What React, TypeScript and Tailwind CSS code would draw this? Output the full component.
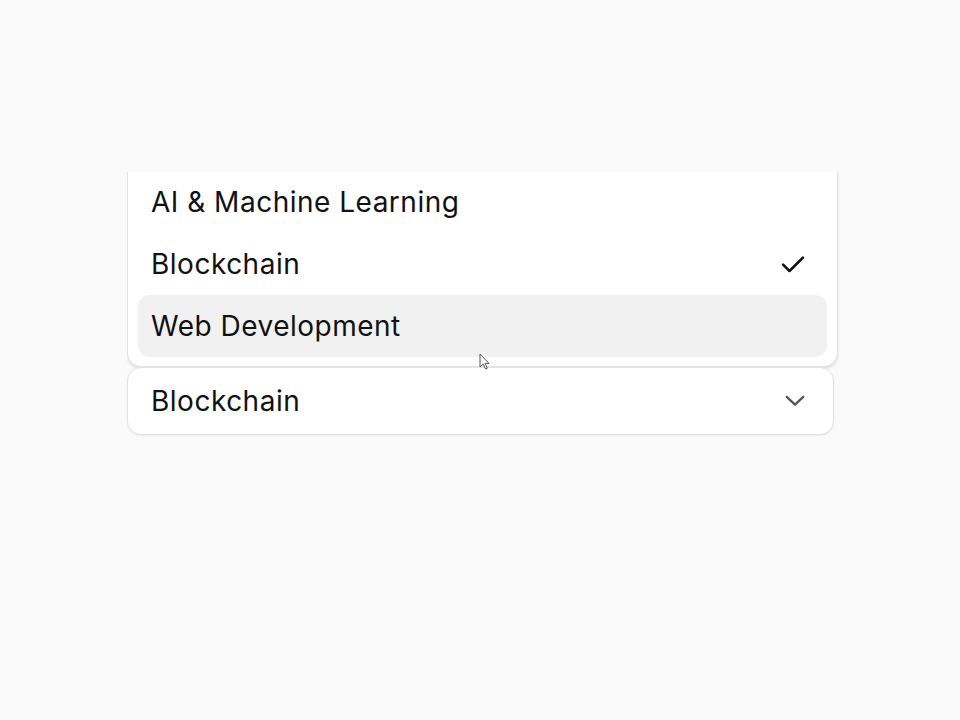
import React from "react";

const items = ["AI & Machine Learning", "Blockchain", "Web Development"];

export default function App() {
  return (
    <div
      className="relative w-[960px] h-[720px] bg-[#fafafa] overflow-hidden"
      style={{ fontFamily: "Inter, 'Noto Sans', sans-serif" }}
    >
      <div className="pt-[172px] pl-[127px]">
        <div className="w-[715px] overflow-hidden pb-[3px] pr-[4px]">
          <div className="w-[711px] -mt-[12px] bg-white rounded-[14px] border border-[#e2e2e2] shadow-[0_2px_3px_rgba(0,0,0,0.10)] px-[10px] pt-[10px] pb-[9px]">
            {items.map((it, i) => (
              <div
                key={it}
                className={`flex items-center justify-between h-[62px] pl-[13px] pr-[20px] rounded-[12px] ${
                  i === 2 ? "bg-[#f1f1f2]" : ""
                }`}
              >
                <span className="text-[28px] leading-none text-[#111] tracking-[0.5px]">{it}</span>
                {i === 1 && (
                  <svg width="28" height="28" viewBox="0 0 24 24" fill="none" stroke="#111" strokeWidth="2.2" strokeLinecap="round" strokeLinejoin="round">
                    <path d="M3.5 12.5l5.5 5.5L20.5 6.5" />
                  </svg>
                )}
              </div>
            ))}
          </div>
        </div>
        <div className="w-[707px] h-[68px] -mt-[3px] bg-white rounded-[14px] border border-[#e3e3e3] shadow-[0_1px_2px_rgba(0,0,0,0.06)] flex items-center justify-between pl-[23px] pr-[27px]">
          <span className="text-[28px] leading-none text-[#111] tracking-[0.5px]">Blockchain</span>
          <svg width="22" height="22" viewBox="0 0 24 24" fill="none" stroke="#555" strokeWidth="2.5" strokeLinecap="round" strokeLinejoin="round">
            <path d="M3 7.5l9 8.5 9-8.5" />
          </svg>
        </div>
      </div>
      <svg className="absolute left-[479px] top-[353px]" width="12" height="17" viewBox="0 0 12 17">
        <path d="M1 1v13l3.2-3 2.3 5 1.8-.8-2.2-4.8H10z" fill="#fff" stroke="#555" strokeWidth="1" />
      </svg>
    </div>
  );
}
